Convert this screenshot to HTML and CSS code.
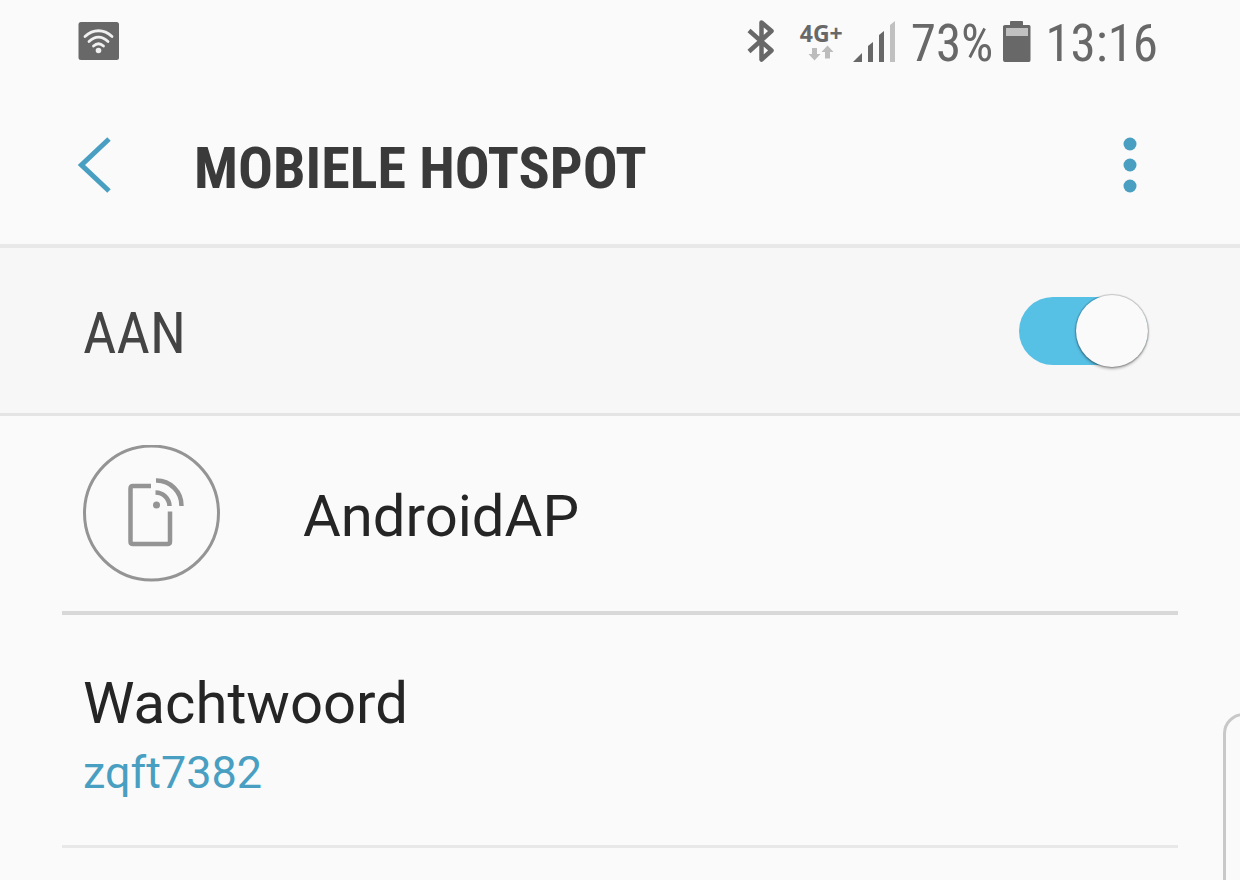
FILE: index.html
```html
<!DOCTYPE html>
<html lang="nl">
<head>
    <meta charset="UTF-8">
    <meta name="viewport" content="width=device-width, initial-scale=1.0">
    <title>Mobiele hotspot</title>
    <link rel="stylesheet" href="styles.css">
</head>
<body>
    <div class="status-bar">
        <svg class="status-wifi" width="42" height="40" viewBox="0 0 42 40">
            <rect x="0.5" y="1" width="40.5" height="38" rx="2.5" fill="#686868"/>
            <g fill="none" stroke="#f0f0f0" stroke-width="2.8" stroke-linecap="round">
                <path d="M7 15.5C15 7.8 26 7.8 34 15.5"/>
                <path d="M11 20.5C17 14.7 24 14.7 30 20.5"/>
                <path d="M15.5 25C19 21.8 22 21.8 25.5 25"/>
            </g>
            <circle cx="20.5" cy="29.5" r="2.8" fill="#f0f0f0"/>
        </svg>
        <div class="status-right">
            <svg class="status-bluetooth" width="28" height="44" viewBox="0 0 28 44">
                <path d="M2 11.5L24.5 31.5L14.5 40.5V3.5L24.5 12L2 32.5" fill="none" stroke="#686868" stroke-width="4.5" stroke-linejoin="round"/>
            </svg>
            <div class="network">
                <span class="network-type">4G+</span>
                <svg width="26" height="16" viewBox="0 0 26 16" fill="#bcbcbc">
                    <path d="M4 3H9V9H12.5L6.5 15.5L0.5 9H4Z"/>
                    <path d="M17 13.5V7H13.5L19.5 0.5L25.5 7H22V13.5Z"/>
                </svg>
            </div>
            <svg class="status-signal" width="42" height="41" viewBox="0 0 42 41">
                <path d="M0 41L9 32V41Z" fill="#686868"/>
                <path d="M15 41V25L20 21V41Z" fill="#686868"/>
                <path d="M26 41V14L31 10V41Z" fill="#686868"/>
                <path d="M37 41V4L42 0V41Z" fill="#c0c0c0"/>
            </svg>
            <span class="status-text">73%</span>
            <svg class="status-battery" width="28" height="42" viewBox="0 0 28 42">
                <path d="M7 5V2Q7 1 8 1H19Q20 1 20 2V5H26Q27.5 5 27.5 6.5V40Q27.5 42 26 42H2Q0 42 0 40V6.5Q0 5 2 5Z" fill="#686868"/>
                <rect x="3" y="8" width="22" height="8" fill="#c0c0c0"/>
            </svg>
            <span class="status-text">13:16</span>
        </div>
    </div>
    <header class="header">
        <button class="back-button" type="button" aria-label="Terug">
            <svg width="34" height="56" viewBox="0 0 34 56">
                <path d="M31 2L3.5 28L31 54" fill="none" stroke="#499fc1" stroke-width="5"/>
            </svg>
        </button>
        <h1>MOBIELE HOTSPOT</h1>
        <button class="menu-button" type="button" aria-label="Meer opties">
            <svg width="14" height="56" viewBox="0 0 14 56" fill="#499fc1">
                <circle cx="7" cy="7" r="6.5"/>
                <circle cx="7" cy="28" r="6.5"/>
                <circle cx="7" cy="49" r="6.5"/>
            </svg>
        </button>
    </header>
    <div class="switch-row">
        <label for="hotspotSwitch">AAN</label>
        <input type="checkbox" id="hotspotSwitch" class="switch" checked>
    </div>
    <main class="settings">
        <div class="network-row">
            <svg class="hotspot-icon" width="138" height="138" viewBox="0 0 138 138" fill="none" stroke="#949494">
                <circle cx="68.5" cy="68" r="67" stroke-width="3"/>
                <path d="M68 41H50Q47.500 41 47.500 43.5V96.5Q47.500 99 50 99H84.500Q87 99 87 96.500V66.500" stroke-width="4.5"/>
                <path d="M73 35.5A25 25 0 0 1 98.500 61" stroke-width="4.5"/>
                <path d="M72.5 47.5A14 14 0 0 1 86.500 61" stroke-width="4.5"/>
                <circle cx="73.5" cy="60" r="3.5" fill="#949494" stroke="none"/>
            </svg>
            <span class="item-title">AndroidAP</span>
        </div>
        <div class="password-row">
            <div class="item-title">Wachtwoord</div>
            <div class="item-value">zqft7382</div>
        </div>
    </main>
    <div class="edge-handle"></div>
</body>
</html>
```
FILE: styles.css
```css
* {
    box-sizing: border-box;
}
body {
    margin: 0;
    min-height: 100vh;
    background-color: #fafafa;
    color: #252525;
    font-family: 'Roboto', sans-serif;
    overflow: hidden;
}
svg {
    display: block;
    flex-shrink: 0;
}
button {
    padding: 0;
    border: none;
    background: none;
    cursor: pointer;
}

/* Status bar */
.status-bar {
    display: flex;
    justify-content: space-between;
    align-items: center;
    height: 82px;
    padding: 0 82px 0 78px;
}
.status-right {
    display: flex;
    align-items: center;
    gap: 10px;
}
.status-text {
    padding-top: 6px;
    font-family: 'Roboto Condensed', 'Roboto', sans-serif;
    font-size: 51px;
    line-height: 60px;
    color: #686868;
}
.status-signal {
    margin-right: 6px;
}
.status-battery {
    margin-right: 4px;
}
.network {
    display: flex;
    flex-direction: column;
    align-items: center;
    margin-left: 15px;
}
.network-type {
    font-family: 'Open Sans', sans-serif;
    font-size: 23px;
    font-weight: 700;
    line-height: 24px;
    color: #686868;
}

/* Title bar */
.header {
    display: flex;
    align-items: center;
    height: 166px;
    padding: 4px 103px 0 78px;
    border-bottom: 4px solid #e8e8e8;
}
.header h1 {
    flex: 1;
    margin: 0 0 0 82px;
    padding-top: 6px;
    font-family: 'Roboto Condensed', 'Roboto', sans-serif;
    font-size: 58px;
    font-weight: 700;
    line-height: 72px;
    color: #3a3a3a;
}

/* On/off row */
.switch-row {
    display: flex;
    justify-content: space-between;
    align-items: center;
    height: 168px;
    padding: 0 92px 0 83px;
    background-color: #f7f7f7;
    border-bottom: 3px solid #e4e4e4;
}
.switch-row label {
    padding-top: 4px;
    font-family: 'Roboto Condensed', 'Roboto', sans-serif;
    font-size: 58px;
    line-height: 72px;
    color: #444;
}
.switch {
    appearance: none;
    display: flex;
    justify-content: flex-end;
    align-items: center;
    width: 129px;
    height: 68px;
    margin: 0;
    border-radius: 36px;
    background-color: #57c0e5;
    cursor: pointer;
}
.switch::before {
    content: "";
    flex-shrink: 0;
    width: 72px;
    height: 72px;
    border-radius: 50%;
    background-color: #fafafa;
    box-shadow: 0 0 1px 1px rgba(0, 0, 0, 0.2), 0 2px 3px rgba(0, 0, 0, 0.3);
}
.switch:not(:checked) {
    justify-content: flex-start;
    background-color: #c0c0c0;
}

/* Settings list */
.settings {
    padding: 0 62px;
}
.network-row {
    display: flex;
    align-items: center;
    gap: 82px;
    height: 199px;
    padding: 0 21px;
    border-bottom: 4px solid #d8d8d8;
}
.network-row .item-title {
    padding-top: 4px;
}
.password-row {
    padding: 52px 21px 38px;
    border-bottom: 3px solid #e8e8e8;
}
.item-title {
    font-size: 58px;
    line-height: 72px;
}
.item-value {
    font-size: 45px;
    line-height: 68px;
    color: #499fc1;
}

/* Edge panel handle */
.edge-handle {
    position: fixed;
    top: 713px;
    right: -24px;
    bottom: -24px;
    width: 41px;
    border: 3px solid #c8c8c8;
    border-radius: 24px;
}
```
